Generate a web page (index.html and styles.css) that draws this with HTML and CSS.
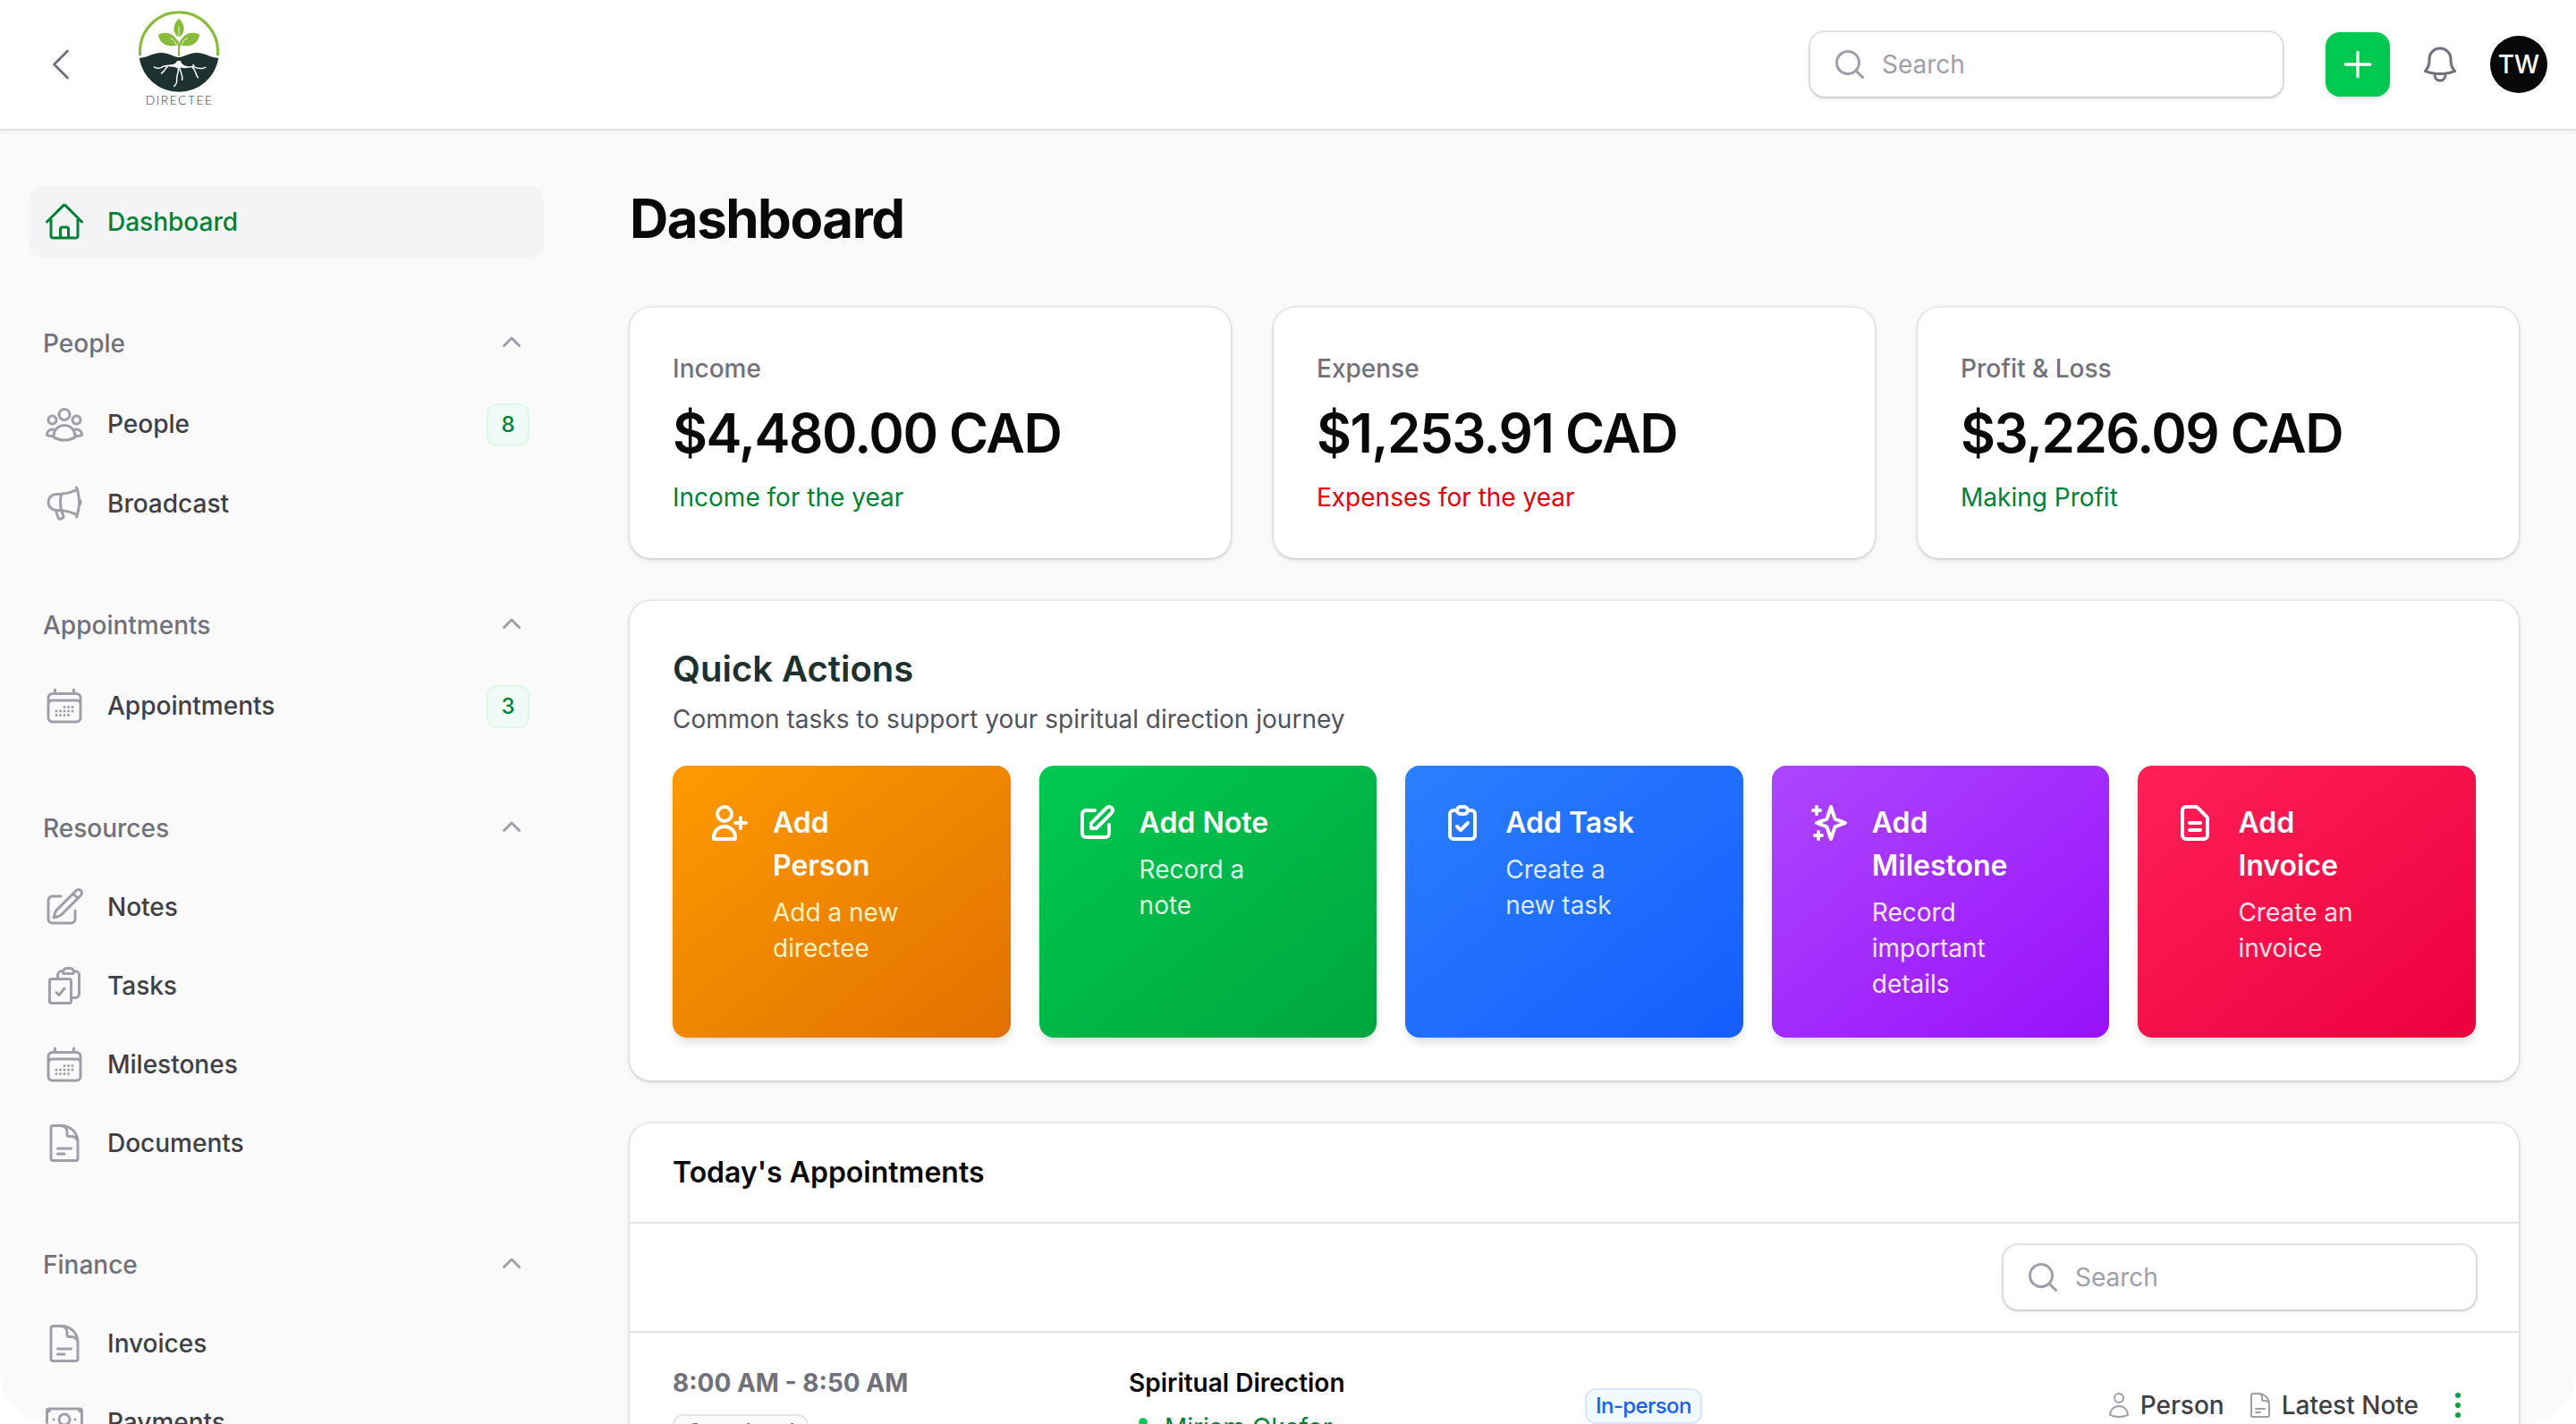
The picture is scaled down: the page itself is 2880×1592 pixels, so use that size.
FILE: index.html
```html
<!DOCTYPE html>
<html lang="en">
<head>
  <meta charset="utf-8">
  <title>Dashboard - Directee</title>
  <link rel="stylesheet" href="styles.css">
</head>
<body>

<!-- shared icons -->
<svg class="sprite" xmlns="http://www.w3.org/2000/svg">
  <symbol id="i-search" viewBox="0 0 20 20"><path fill="currentColor" fill-rule="evenodd" d="M9 3.5a5.5 5.5 0 1 0 0 11 5.5 5.5 0 0 0 0-11ZM2 9a7 7 0 1 1 12.452 4.391l3.328 3.329a.75.75 0 1 1-1.06 1.06l-3.329-3.328A7 7 0 0 1 2 9Z"/></symbol>
  <symbol id="i-up" viewBox="0 0 20 20"><path fill="currentColor" fill-rule="evenodd" d="M9.47 6.47a.75.75 0 0 1 1.06 0l4.25 4.25a.75.75 0 1 1-1.06 1.06L10 8.06l-3.72 3.72a.75.75 0 0 1-1.06-1.06l4.25-4.25Z"/></symbol>
  <symbol id="i-calendar" viewBox="0 0 24 24"><path d="M6.75 3v2.25M17.25 3v2.25M3 18.75V7.5a2.25 2.25 0 0 1 2.25-2.25h13.5A2.25 2.25 0 0 1 21 7.5v11.25m-18 0A2.25 2.25 0 0 0 5.25 21h13.5A2.25 2.25 0 0 0 21 18.75m-18 0v-7.5A2.25 2.25 0 0 1 5.25 9h13.5A2.25 2.25 0 0 1 21 11.25v7.5m-9-6h.008v.008H12v-.008ZM12 15h.008v.008H12V15Zm0 2.25h.008v.008H12v-.008ZM9.75 15h.008v.008H9.75V15Zm0 2.25h.008v.008H9.75v-.008ZM7.5 15h.008v.008H7.5V15Zm0 2.25h.008v.008H7.5v-.008Zm6.75-4.5h.008v.008h-.008v-.008Zm0 2.25h.008v.008h-.008V15Zm0 2.25h.008v.008h-.008v-.008Zm2.25-4.5h.008v.008H16.5v-.008Zm0 2.25h.008v.008H16.5V15Z"/></symbol>
  <symbol id="i-document" viewBox="0 0 24 24"><path d="M19.5 14.25v-2.625a3.375 3.375 0 0 0-3.375-3.375h-1.5A1.125 1.125 0 0 1 13.5 7.125v-1.5a3.375 3.375 0 0 0-3.375-3.375H8.25m0 12.75h7.5m-7.5 3H12M10.5 2.25H5.625c-.621 0-1.125.504-1.125 1.125v17.25c0 .621.504 1.125 1.125 1.125h12.75c.621 0 1.125-.504 1.125-1.125V11.25a9 9 0 0 0-9-9Z"/></symbol>
</svg>

<header class="topbar">
  <svg class="icon back" viewBox="0 0 24 24"><path d="M15.75 19.5 8.25 12l7.5-7.5"/></svg>
  <svg class="logo" viewBox="45 36 270 324">
    <path d="M49.5 187V172A130.500 130.500 0 0 1 310.500 172V187" fill="none" stroke="#86bc38" stroke-width="9"/>
    <path d="M47 194C72 195 92 177 120 177C146 177 160 191 180 192C200 191 214 177 240 177C268 177 288 195 313 194A134.500 134.500 0 0 1 47 194Z" fill="#1d322f"/>
    <path d="M180 62C203 84 201 110 183 123H177C159 110 157 84 180 62Z" fill="#86bc38"/>
    <path d="M111 116C135 104 172 110 176 152C148 158 116 152 111 116ZM249 116C225 104 188 110 184 152C212 158 244 152 249 116Z" fill="#86bc38"/>
    <path d="M180 188V150C178 142 172 134 164 130M180 162C182 146 188 136 196 130" fill="none" stroke="#86bc38" stroke-width="6"/>
    <path d="M180 90V122M150 127C162 132 170 142 173 156M210 127C198 132 190 142 187 156" fill="none" stroke="#fff" stroke-width="2.500"/>
    <path d="M174 204H186C188 215 198 221 210 222L204 229C192 229 184 226 181 226L172 228C166 223 154 225 146 223L144 219C158 216 170 216 174 204Z" fill="#fff"/>
    <path d="M172 219C155 222 135 216 122 226C112 230 104 230 97 225M142 222C134 232 132 240 121 246M178 224C181 244 170 256 173 268C174 278 170 284 164 289M182 226C184 240 194 248 191 268M190 222C204 230 216 222 230 224C246 232 256 232 269 226M226 226C238 236 234 248 244 260M231 224L228 217" fill="none" stroke="#fff" stroke-width="4.500" stroke-linecap="round"/>
    <text class="logo-text" x="68" y="350" textLength="223">DIRECTEE</text>
  </svg>
  <div class="topbar-end">
    <div class="search"><svg class="icon-sm"><use href="#i-search"/></svg>Search</div>
    <button class="create"><svg viewBox="0 0 24 24"><path d="M12 4.5v15m7.500-7.500h-15"/></svg></button>
    <svg class="icon bell" viewBox="0 0 24 24"><path d="M14.857 17.082a23.848 23.848 0 0 0 5.454-1.310A8.967 8.967 0 0 1 18 9.750V9A6 6 0 0 0 6 9v.75a8.967 8.967 0 0 1-2.312 6.022c1.733.64 3.560 1.085 5.455 1.310m5.714 0a24.255 24.255 0 0 1-5.714 0m5.714 0a3 3 0 1 1-5.714 0"/></svg>
    <div class="avatar">TW</div>
  </div>
</header>

<div class="layout">
  <nav class="sidebar">
    <div class="group">
      <a class="item active"><svg class="icon" viewBox="0 0 24 24"><path d="m2.250 12 8.954-8.955c.44-.439 1.152-.439 1.591 0L21.750 12M4.500 9.750v10.125c0 .621.504 1.125 1.125 1.125H9.750v-4.875c0-.621.504-1.125 1.125-1.125h2.250c.621 0 1.125.504 1.125 1.125V21h4.125c.621 0 1.125-.504 1.125-1.125V9.750M8.250 21h8.250"/></svg>Dashboard</a>
    </div>

    <div class="group">
      <div class="group-label">People<svg class="icon-sm"><use href="#i-up"/></svg></div>
      <a class="item has-badge"><svg class="icon" viewBox="0 0 24 24"><path d="M18 18.720a9.094 9.094 0 0 0 3.741-.479 3 3 0 0 0-4.682-2.720m.94 3.198.001.031c0 .225-.012.447-.037.666A11.944 11.944 0 0 1 12 21c-2.170 0-4.207-.576-5.963-1.584A6.062 6.062 0 0 1 6 18.719m12 0a5.971 5.971 0 0 0-.941-3.197m0 0A5.995 5.995 0 0 0 12 12.750a5.995 5.995 0 0 0-5.058 2.772m0 0a3 3 0 0 0-4.681 2.720 8.986 8.986 0 0 0 3.740.477m.94-3.197a5.971 5.971 0 0 0-.94 3.197M15 6.750a3 3 0 1 1-6 0 3 3 0 0 1 6 0Zm6 3a2.250 2.250 0 1 1-4.500 0 2.250 2.250 0 0 1 4.500 0Zm-13.500 0a2.250 2.250 0 1 1-4.500 0 2.250 2.250 0 0 1 4.500 0Z"/></svg>People<span class="count">8</span></a>
      <a class="item"><svg class="icon" viewBox="0 0 24 24"><path d="M10.340 15.840c-.688-.06-1.386-.09-2.090-.09H7.500a4.500 4.500 0 1 1 0-9h.75c.704 0 1.402-.03 2.090-.09m0 9.180c.253.962.584 1.892.985 2.783.247.55.06 1.210-.463 1.511l-.657.38c-.551.318-1.260.117-1.527-.461a20.845 20.845 0 0 1-1.440-4.282m3.102.069a18.030 18.030 0 0 1-.59-4.590c0-1.586.205-3.124.59-4.590m0 9.180a23.848 23.848 0 0 1 8.835 2.535M10.340 6.660a23.847 23.847 0 0 0 8.835-2.535m0 0A23.740 23.740 0 0 0 18.795 3m.38 1.125a23.910 23.910 0 0 1 1.014 5.395m-1.014 8.855c-.118.38-.245.754-.38 1.125m.38-1.125a23.910 23.910 0 0 0 1.014-5.395m0-3.460c.495.413.811 1.035.811 1.730 0 .695-.316 1.317-.811 1.730m0-3.460a24.347 24.347 0 0 1 0 3.460"/></svg>Broadcast</a>
    </div>

    <div class="group">
      <div class="group-label">Appointments<svg class="icon-sm"><use href="#i-up"/></svg></div>
      <a class="item has-badge"><svg class="icon"><use href="#i-calendar"/></svg>Appointments<span class="count">3</span></a>
    </div>

    <div class="group">
      <div class="group-label">Resources<svg class="icon-sm"><use href="#i-up"/></svg></div>
      <a class="item"><svg class="icon" viewBox="0 0 24 24"><path d="m16.862 4.487 1.687-1.688a1.875 1.875 0 1 1 2.652 2.652L10.582 16.070a4.500 4.500 0 0 1-1.897 1.130L6 18l.8-2.685a4.500 4.500 0 0 1 1.130-1.897l8.932-8.931Zm0 0L19.500 7.125M18 14v4.750A2.250 2.250 0 0 1 15.750 21H5.250A2.250 2.250 0 0 1 3 18.750V8.250A2.250 2.250 0 0 1 5.250 6H10"/></svg>Notes</a>
      <a class="item"><svg class="icon" viewBox="0 0 24 24"><path d="M11.350 3.836c-.065.21-.1.433-.1.664 0 .414.336.75.75.75h4.500a.75.75 0 0 0 .75-.75 2.250 2.250 0 0 0-.1-.664m-5.800 0A2.251 2.251 0 0 1 13.500 2.250H15c1.012 0 1.867.668 2.150 1.586m-5.800 0c-.376.023-.75.05-1.124.08C9.095 4.010 8.250 4.973 8.250 6.108V8.250m8.900-4.414c.376.023.75.05 1.124.08 1.131.094 1.976 1.057 1.976 2.192V16.500A2.250 2.250 0 0 1 18 18.750h-2.250m-7.500-10.500H4.875c-.621 0-1.125.504-1.125 1.125v11.250c0 .621.504 1.125 1.125 1.125h9.750c.621 0 1.125-.504 1.125-1.125V18.750m-7.500-10.500h6.375c.621 0 1.125.504 1.125 1.125v9.375m-8.250-3 1.500 1.500 3-3.750"/></svg>Tasks</a>
      <a class="item"><svg class="icon"><use href="#i-calendar"/></svg>Milestones</a>
      <a class="item"><svg class="icon"><use href="#i-document"/></svg>Documents</a>
    </div>

    <div class="group">
      <div class="group-label">Finance<svg class="icon-sm"><use href="#i-up"/></svg></div>
      <a class="item"><svg class="icon"><use href="#i-document"/></svg>Invoices</a>
      <a class="item"><svg class="icon" viewBox="0 0 24 24"><path d="M2.250 18.750a60.070 60.070 0 0 1 15.797 2.101c.727.198 1.453-.342 1.453-1.096V18.750M3.750 4.500v.75A.75.75 0 0 1 3 6h-.75m0 0v-.375c0-.621.504-1.125 1.125-1.125H20.250M2.250 6v9m18-10.500v.75c0 .414.336.75.75.75h.75m-1.500-1.500h.375c.621 0 1.125.504 1.125 1.125v9.750c0 .621-.504 1.125-1.125 1.125h-.375m1.500-1.500H21a.75.75 0 0 0-.75.75v.75m0 0H3.750m0 0h-.375a1.125 1.125 0 0 1-1.125-1.125V15m1.500 1.500v-.75A.75.75 0 0 0 3 15h-.75M15 10.500a3 3 0 1 1-6 0 3 3 0 0 1 6 0Zm3 0h.008v.008H18V10.500Zm-12 0h.008v.008H6V10.500Z"/></svg>Payments</a>
    </div>
  </nav>

  <main class="main">
    <h1>Dashboard</h1>

    <div class="stats">
      <div class="card stat">
        <span class="stat-label">Income</span>
        <span class="stat-value">$4,480.00 CAD</span>
        <span class="stat-note good">Income for the year</span>
      </div>
      <div class="card stat">
        <span class="stat-label">Expense</span>
        <span class="stat-value">$1,253.91 CAD</span>
        <span class="stat-note bad">Expenses for the year</span>
      </div>
      <div class="card stat">
        <span class="stat-label">Profit &amp; Loss</span>
        <span class="stat-value">$3,226.09 CAD</span>
        <span class="stat-note good">Making Profit</span>
      </div>
    </div>

    <section class="card quick">
      <h2>Quick Actions</h2>
      <p>Common tasks to support your spiritual direction journey</p>
      <div class="tiles">
        <a class="tile amber">
          <svg viewBox="0 0 24 24"><path d="M18 9v3m0 0v3m0-3h3m-3 0h-3m-2-5a4 4 0 11-8 0 4 4 0 018 0zM3 20a6 6 0 0112 0v1H3v-1z"/></svg>
          <div><h3>Add Person</h3><p>Add a new directee</p></div>
        </a>
        <a class="tile green">
          <svg viewBox="0 0 24 24"><path d="M11 5H6a2 2 0 00-2 2v11a2 2 0 002 2h11a2 2 0 002-2v-5m-1.414-9.414a2 2 0 112.828 2.828L11.828 15H9v-2.828l8.586-8.586z"/></svg>
          <div><h3>Add Note</h3><p>Record a note</p></div>
        </a>
        <a class="tile blue">
          <svg viewBox="0 0 24 24"><path d="M9 5H7a2 2 0 00-2 2v12a2 2 0 002 2h10a2 2 0 002-2V7a2 2 0 00-2-2h-2M9 5a2 2 0 002 2h2a2 2 0 002-2M9 5a2 2 0 012-2h2a2 2 0 012 2m-6 9l2 2 4-4"/></svg>
          <div><h3>Add Task</h3><p>Create a new task</p></div>
        </a>
        <a class="tile purple">
          <svg viewBox="0 0 24 24"><path d="M5 3v4M3 5h4M6 17v4m-2-2h4m5-16l2.286 6.857L21 12l-5.714 2.143L13 21l-2.286-6.857L5 12l5.714-2.143L13 3z"/></svg>
          <div><h3>Add Milestone</h3><p>Record important details</p></div>
        </a>
        <a class="tile rose">
          <svg viewBox="0 0 24 24"><path d="M9 12h6m-6 4h6m2 5H7a2 2 0 01-2-2V5a2 2 0 012-2h5.586a1 1 0 01.707.293l5.414 5.414a1 1 0 01.293.707V19a2 2 0 01-2 2z"/></svg>
          <div><h3>Add Invoice</h3><p>Create an invoice</p></div>
        </a>
      </div>
    </section>

    <section class="card today">
      <div class="today-head">Today's Appointments</div>
      <div class="today-tools">
        <div class="search"><svg class="icon-sm"><use href="#i-search"/></svg>Search</div>
      </div>
      <div class="row">
        <div class="when">
          <b>8:00 AM - 8:50 AM</b>
          <span class="badge gray">Completed</span>
        </div>
        <div class="what">
          <b>Spiritual Direction</b>
          <span class="who"><svg viewBox="0 0 20 20"><path d="M10 8a3 3 0 1 0 0-6 3 3 0 0 0 0 6ZM3.465 14.493a1.230 1.230 0 0 0 .41 1.412A9.957 9.957 0 0 0 10 18c2.310 0 4.438-.784 6.131-2.100.43-.333.604-.903.408-1.410a7.001 7.001 0 0 0-13.074.003Z"/></svg>Miriam Okafor</span>
        </div>
        <div class="where"><span class="badge blue-badge">In-person</span></div>
        <div class="actions">
          <a><svg class="icon" viewBox="0 0 24 24"><path d="M15.750 6a3.750 3.750 0 1 1-7.500 0 3.750 3.750 0 0 1 7.500 0ZM4.501 20.118a7.500 7.500 0 0 1 14.998 0A17.933 17.933 0 0 1 12 21.750c-2.676 0-5.216-.584-7.499-1.632Z"/></svg>Person</a>
          <a><svg class="icon"><use href="#i-document"/></svg>Latest Note</a>
          <svg class="dots" viewBox="0 0 20 20"><circle cx="10" cy="4.500" r="1.500"/><circle cx="10" cy="10" r="1.500"/><circle cx="10" cy="15.500" r="1.500"/></svg>
        </div>
      </div>
    </section>
  </main>
</div>

</body>
</html>
```

FILE: styles.css
```css
* {
  box-sizing: border-box;
}

html {
  background: #fff;
}

body {
  margin: 0;
  height: 1592px;
  overflow: hidden;
  background: #fafafa;
  border-radius: 0 0 60px 60px;
  color: #09090b;
  font-family: Inter, "Liberation Sans", sans-serif;
  font-size: 28px;
  line-height: 40px;
}

h1, h2, h3, p {
  margin: 0;
}

.sprite {
  position: absolute;
  width: 0;
  height: 0;
}

.icon {
  width: 48px;
  height: 48px;
  flex: none;
  fill: none;
  stroke: currentColor;
  stroke-width: 1.5;
  stroke-linecap: round;
  stroke-linejoin: round;
}

.icon-sm {
  width: 40px;
  height: 40px;
  flex: none;
  color: #9f9fa9;
}

/* top bar */
.topbar {
  display: flex;
  align-items: center;
  height: 146px;
  padding: 0 32px 0 44px;
  background: #fff;
  border-bottom: 2px solid #e4e4e7;
  box-shadow: 0 2px 4px rgba(0, 0, 0, 0.04);
}

.back,
.bell {
  color: #71717b;
}

.logo {
  width: 90px;
  height: 108px;
  margin: 0 0 12px 63px;
}

.logo-text {
  font-family: Lato, sans-serif;
  font-size: 41px;
  font-weight: 300;
  fill: #30343b;
}

.topbar-end {
  display: flex;
  align-items: center;
  margin-left: auto;
}

.search {
  display: flex;
  align-items: center;
  gap: 16px;
  width: 528px;
  height: 72px;
  padding: 0 24px;
  border-radius: 16px;
  background: #fff;
  color: #9f9fa9;
  box-shadow: 0 0 0 2px rgba(9, 9, 11, 0.1), 0 2px 6px rgba(0, 0, 0, 0.1), 0 2px 4px -2px rgba(0, 0, 0, 0.1);
}

.create {
  display: flex;
  align-items: center;
  justify-content: center;
  width: 72px;
  height: 72px;
  margin: 0 32px 0 48px;
  padding: 0;
  border: 0;
  border-radius: 16px;
  background: #00c950;
  box-shadow: 0 2px 6px rgba(0, 0, 0, 0.1), 0 2px 4px -2px rgba(0, 0, 0, 0.1);
}

.create svg {
  width: 44px;
  height: 44px;
  fill: none;
  stroke: #fff;
  stroke-width: 1.8;
  stroke-linecap: round;
}

.avatar {
  width: 64px;
  height: 64px;
  margin-left: 32px;
  border-radius: 50%;
  background: #09090b;
  color: #fff;
  font-weight: 500;
  line-height: 64px;
  text-align: center;
}

/* layout */
.layout {
  display: flex;
}

.sidebar {
  display: flex;
  flex-direction: column;
  gap: 56px;
  flex: none;
  width: 640px;
  padding: 62px 32px 0;
  font-weight: 500;
}

.group {
  display: flex;
  flex-direction: column;
  gap: 8px;
}

.group-label {
  display: flex;
  align-items: center;
  justify-content: space-between;
  height: 80px;
  padding: 0 16px;
  color: #71717b;
}

.item {
  display: flex;
  align-items: center;
  gap: 24px;
  height: 80px;
  padding: 0 16px;
  border-radius: 16px;
  color: #3f3f46;
}

.item .icon {
  color: #9f9fa9;
}

.item.active {
  background: #f4f4f6;
}

.item.active,
.item.active .icon {
  color: #008236;
}

.has-badge {
  height: 83px;
}

.count {
  width: 48px;
  height: 48px;
  margin: 3px 0 0 auto;
  border: 2px solid #dcf9e6;
  border-radius: 12px;
  background: #f0fbf8;
  color: #008236;
  font-size: 24px;
  line-height: 44px;
  text-align: center;
}

.main {
  flex: 1;
  padding: 62px 64px 0;
}

h1 {
  margin-bottom: 64px;
  font-size: 60px;
  font-weight: 700;
  line-height: 72px;
  letter-spacing: -1.5px;
}

.card {
  border-radius: 24px;
  background: #fff;
  box-shadow: 0 0 0 2px rgba(9, 9, 11, 0.055), 0 2px 6px rgba(0, 0, 0, 0.1), 0 2px 4px -2px rgba(0, 0, 0, 0.1);
}

.stats {
  display: grid;
  grid-template-columns: repeat(3, 1fr);
  gap: 48px;
}

.stat {
  display: flex;
  flex-direction: column;
  gap: 16px;
  padding: 48px;
}

.stat-label {
  color: #71717b;
  font-weight: 500;
}

.stat-value {
  font-size: 60px;
  font-weight: 600;
  line-height: 72px;
  letter-spacing: -1.5px;
}

.good {
  color: #008236;
}

.bad {
  color: #e7000b;
}

/* quick actions */
.quick {
  margin-top: 48px;
  padding: 48px;
}

.quick h2 {
  color: #1d322f;
  font-size: 40px;
  font-weight: 600;
  line-height: 56px;
}

.quick > p {
  margin: 8px 0 32px;
  color: #52525c;
}

.tiles {
  display: grid;
  grid-template-columns: repeat(5, 1fr);
  gap: 32px;
}

.tile {
  display: flex;
  gap: 24px;
  padding: 40px;
  border-radius: 16px;
  color: #fff;
  box-shadow: 0 8px 12px -2px rgba(0, 0, 0, 0.1), 0 4px 8px -4px rgba(0, 0, 0, 0.1);
}

.tile svg {
  flex: none;
  width: 48px;
  height: 48px;
  fill: none;
  stroke: currentColor;
  stroke-width: 2;
  stroke-linecap: round;
  stroke-linejoin: round;
}

.tile div {
  width: 153px;
}

.tile h3 {
  margin-bottom: 8px;
  font-size: 32px;
  font-weight: 600;
  line-height: 48px;
}

.amber { background: linear-gradient(to bottom right, #fe9a00, #e17100); }
.green { background: linear-gradient(to bottom right, #00c950, #00a63e); }
.blue { background: linear-gradient(to bottom right, #2b7fff, #155dfc); }
.purple { background: linear-gradient(to bottom right, #ad46ff, #9810fa); }
.rose { background: linear-gradient(to bottom right, #ff2056, #ec003f); }

.amber p { color: #fef3c6; }
.green p { color: #dcfce7; }
.blue p { color: #dbeafe; }
.purple p { color: #f3e8ff; }
.rose p { color: #ffe4e6; }

/* today's appointments */
.today {
  margin-top: 48px;
}

.today-head {
  height: 112px;
  padding: 31px 48px;
  border-bottom: 2px solid #e4e4e7;
  font-size: 32px;
  font-weight: 600;
  line-height: 48px;
}

.today-tools {
  display: flex;
  justify-content: flex-end;
  padding: 24px 48px;
  border-bottom: 2px solid #e4e4e7;
}

.row {
  display: grid;
  grid-template-columns: 510px 510px 1fr auto;
  height: 162px;
  padding: 0 48px;
}

.row b {
  font-weight: 600;
}

.when,
.what {
  display: flex;
  flex-direction: column;
  align-items: flex-start;
  padding-top: 36px;
}

.row .when b {
  color: #71717b;
  font-weight: 700;
}

.who {
  display: flex;
  align-items: center;
  gap: 8px;
  margin-top: 10px;
  color: #008236;
}

.who svg {
  width: 32px;
  height: 32px;
  margin-top: 4px;
  fill: #00c950;
}

.where {
  display: flex;
  align-self: center;
  padding-top: 2px;
}

.badge {
  height: 40px;
  padding: 0 10px;
  border: 2px solid;
  border-radius: 12px;
  font-size: 24px;
  font-weight: 500;
  line-height: 36px;
  letter-spacing: -0.6px;
}

.gray {
  margin-top: 15px;
  padding: 0 14px;
  border-color: #e4e4e7;
  background: #fafafa;
  color: #71717b;
}

.blue-badge {
  border-color: #dbe4ff;
  background: #f0f9fc;
  color: #155dfc;
}

.actions {
  display: flex;
  align-items: center;
  gap: 24px;
  color: #3f3f46;
  font-weight: 500;
}

.actions a {
  display: flex;
  align-items: center;
  gap: 8px;
}

.actions .icon {
  width: 32px;
  height: 32px;
  color: #9f9fa9;
}

.dots {
  width: 40px;
  height: 40px;
  fill: #00a63e;
}
```
